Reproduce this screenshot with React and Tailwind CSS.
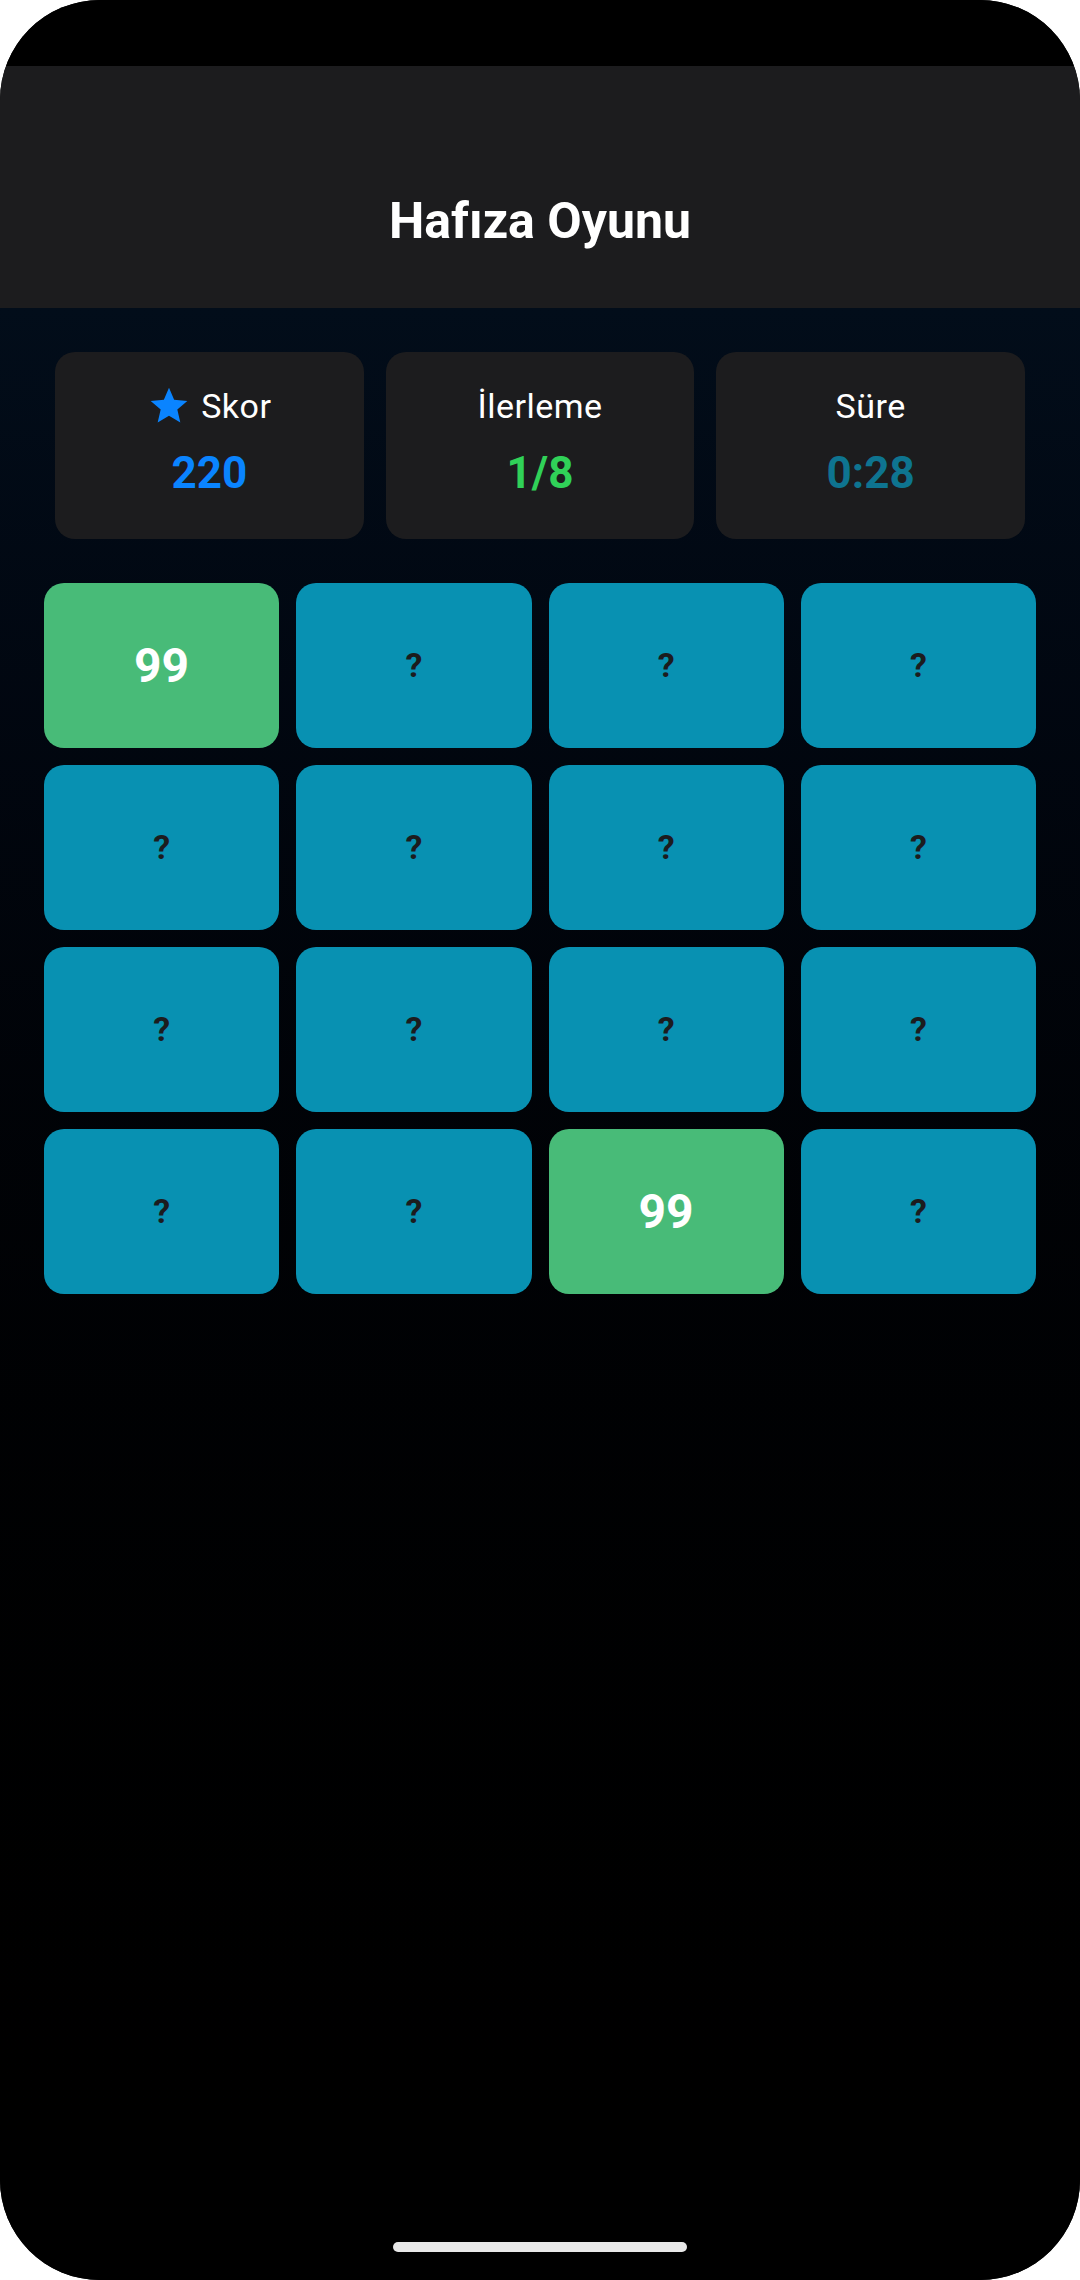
const cards = [
  '99', '?', '?', '?',
  '?', '?', '?', '?',
  '?', '?', '?', '?',
  '?', '?', '99', '?',
];

function StarIcon() {
  return (
    <svg viewBox="0 0 24 24" className="w-[44px] h-[44px] fill-[#0a84ff]">
      <path d="M12 17.27L18.18 21l-1.64-7.03L22 9.24l-7.19-.61L12 2 9.19 8.63 2 9.24l5.46 4.73L5.82 21z" />
    </svg>
  );
}

function StatCard({ icon, label, value, color }) {
  return (
    <div className="flex-1 h-[187px] rounded-[20px] bg-[#1c1c1e] flex flex-col items-center pt-[30px]">
      <div className="h-[48px] flex items-center gap-[10px]">
        {icon}
        <span className="text-[34px] leading-[40px] tracking-[0.5px] text-white">{label}</span>
      </div>
      <div className={`mt-[17px] text-[44px] leading-[52px] font-bold ${color}`}>{value}</div>
    </div>
  );
}

export default function App() {
  return (
    <div className="min-h-screen bg-white font-['Roboto',sans-serif]">
      <div className="relative w-[1080px] h-[2280px] rounded-[100px] overflow-hidden bg-black flex flex-col">
        <div className="h-[66px] shrink-0 bg-black" />
        <header className="h-[242px] shrink-0 bg-[#1c1c1e] pt-[130px] text-center">
          <h1 className="text-[50px] leading-none font-bold text-white">Hafıza Oyunu</h1>
        </header>

        <main className="flex-1 bg-linear-to-b from-[#020d1a] to-black pt-[44px]">
          <div className="flex gap-[22px] px-[55px]">
            <StatCard icon={<StarIcon />} label="Skor" value="220" color="text-[#0a84ff]" />
            <StatCard label="İlerleme" value="1/8" color="text-[#30d158]" />
            <StatCard label="Süre" value="0:28" color="text-[#0e7490]" />
          </div>

          <div className="grid grid-cols-4 gap-[17px] px-[44px] mt-[44px]">
            {cards.map((c, i) =>
              c === '?' ? (
                <div key={i} className="h-[165px] rounded-[20px] bg-[#0891b2] flex items-center justify-center">
                  <span className="text-[34px] font-bold text-[#1c1c1e]">?</span>
                </div>
              ) : (
                <div key={i} className="h-[165px] rounded-[20px] bg-[#48bb78] flex items-center justify-center">
                  <span className="text-[48px] font-bold text-white">{c}</span>
                </div>
              )
            )}
          </div>
        </main>

        <div className="absolute bottom-[28px] left-1/2 -translate-x-1/2 w-[294px] h-[10px] rounded-full bg-[#e8e8e8]" />
      </div>
    </div>
  );
}
